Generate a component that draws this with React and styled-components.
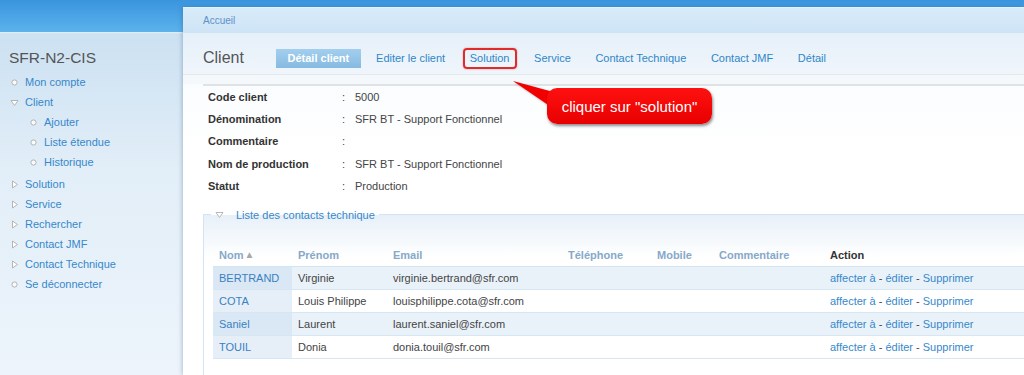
import React from "react";
import styled, { createGlobalStyle, css } from "styled-components";

const GlobalStyle = createGlobalStyle`
  html, body {
    margin: 0;
    padding: 0;
  }
  body {
    font-family: "Liberation Sans", Arial, sans-serif;
    font-size: 11px;
    color: #444;
  }
`;

const menu = [
  { label: "Mon compte", icon: "dot" },
  {
    label: "Client",
    icon: "open",
    children: ["Ajouter", "Liste étendue", "Historique"],
  },
  { label: "Solution", icon: "closed" },
  { label: "Service", icon: "closed" },
  { label: "Rechercher", icon: "closed" },
  { label: "Contact JMF", icon: "closed" },
  { label: "Contact Technique", icon: "closed" },
  { label: "Se déconnecter", icon: "dot" },
];

const tabs = [
  { label: "Détail client", active: true },
  { label: "Editer le client" },
  { label: "Solution", marked: true },
  { label: "Service" },
  { label: "Contact Technique" },
  { label: "Contact JMF" },
  { label: "Détail" },
];

const details = [
  ["Code client", "5000"],
  ["Dénomination", "SFR BT - Support Fonctionnel"],
  ["Commentaire", ""],
  ["Nom de production", "SFR BT - Support Fonctionnel"],
  ["Statut", "Production"],
];

const columns = [
  { label: "Nom", width: 79, sorted: true },
  { label: "Prénom", width: 95 },
  { label: "Email", width: 175 },
  { label: "Téléphone", width: 89 },
  { label: "Mobile", width: 62 },
  { label: "Commentaire", width: 111 },
  { label: "Action", dark: true },
];

const contacts = [
  ["BERTRAND", "Virginie", "virginie.bertrand@sfr.com"],
  ["COTA", "Louis Philippe", "louisphilippe.cota@sfr.com"],
  ["Saniel", "Laurent", "laurent.saniel@sfr.com"],
  ["TOUIL", "Donia", "donia.touil@sfr.com"],
];

/* little grey bullets of the side menu */
const Bullet = ({ type }) => {
  if (type === "open") {
    return (
      <svg width="9" height="9" viewBox="0 0 9 9">
        <path d="M1 2.5 H8 L4.5 7.5 Z" fill="#fff" stroke="#b4b4b4" strokeWidth="1" />
      </svg>
    );
  }
  if (type === "closed") {
    return (
      <svg width="9" height="9" viewBox="0 0 9 9">
        <path d="M2.5 1 V8 L7.5 4.5 Z" fill="#fff" stroke="#b4b4b4" strokeWidth="1" />
      </svg>
    );
  }
  return (
    <svg width="9" height="9" viewBox="0 0 9 9">
      <circle cx="4.5" cy="4.5" r="2.6" fill="#fafafa" stroke="#b4b4b4" strokeWidth="1" />
    </svg>
  );
};

const App = () => {
  return (
    <>
      <GlobalStyle />
      <Page>
        <Sidebar>
          <SiteTitle>SFR-N2-CIS</SiteTitle>
          <Menu>
            {menu.map((item) => (
              <li key={item.label}>
                <MenuItem>
                  <Bullet type={item.icon} />
                  <MenuLink>{item.label}</MenuLink>
                </MenuItem>
                {item.children && (
                  <SubMenu>
                    {item.children.map((child) => (
                      <MenuItem key={child} sub>
                        <Bullet type="dot" />
                        <MenuLink>{child}</MenuLink>
                      </MenuItem>
                    ))}
                  </SubMenu>
                )}
              </li>
            ))}
          </Menu>
        </Sidebar>

        <Main>
          <Breadcrumb>Accueil</Breadcrumb>
          <Header>
            <PageTitle>Client</PageTitle>
            <Tabs>
              {tabs.map((tab) => (
                <Tab key={tab.label} active={tab.active} marked={tab.marked}>
                  {tab.label}
                </Tab>
              ))}
            </Tabs>
          </Header>

          <Body>
            <DetailBox>
              {details.map(([label, value]) => (
                <React.Fragment key={label}>
                  <DetailLabel>{label}</DetailLabel>
                  <DetailColon>:</DetailColon>
                  <DetailValue>{value}</DetailValue>
                </React.Fragment>
              ))}
            </DetailBox>

            <ContactsFieldset>
              <Legend>
                <svg width="9" height="9" viewBox="0 0 9 9">
                  <path d="M1 2.5 H8 L4.5 7.5 Z" fill="#fff" stroke="#b8b8b8" strokeWidth="1" />
                </svg>
                <span>Liste des contacts technique</span>
              </Legend>
              <ContactTable>
                <colgroup>
                  {columns.map((col) => (
                    <col key={col.label} style={col.width ? { width: col.width } : undefined} />
                  ))}
                </colgroup>
                <thead>
                  <tr>
                    {columns.map((col) => (
                      <HeadCell key={col.label} dark={col.dark}>
                        {col.label}
                        {col.sorted && <SortArrow>▲</SortArrow>}
                      </HeadCell>
                    ))}
                  </tr>
                </thead>
                <tbody>
                  {contacts.map(([nom, prenom, email], i) => (
                    <Row key={nom} odd={i % 2 === 0}>
                      <NameCell odd={i % 2 === 0}>{nom}</NameCell>
                      <Cell>{prenom}</Cell>
                      <Cell>{email}</Cell>
                      <Cell />
                      <Cell />
                      <Cell />
                      <Cell>
                        <ActionLink>affecter à</ActionLink> - <ActionLink>éditer</ActionLink> -{" "}
                        <ActionLink>Supprimer</ActionLink>
                      </Cell>
                    </Row>
                  ))}
                </tbody>
              </ContactTable>
            </ContactsFieldset>
          </Body>

          {/* annotation over the screen */}
          <Callout>
            <CalloutTail width="52" height="40" viewBox="0 0 52 40">
              <path d="M2 2 L46 14 L46 32 Z" fill="#f20000" />
            </CalloutTail>
            <CalloutText>cliquer sur "solution"</CalloutText>
          </Callout>
        </Main>
      </Page>
    </>
  );
};

export default App;

const Page = styled.div`
  display: grid;
  grid-template-columns: 183px 1fr;
  height: 375px;
  overflow: hidden;
  background: linear-gradient(
    to bottom,
    #3a95de 0,
    #5bb2ec 32px,
    #e4f0f9 32px,
    #cce1f2 34px,
    #e2eef8 170px,
    #edf4fb 375px
  );
`;

const Sidebar = styled.aside`
  padding-top: 48px;
`;

const SiteTitle = styled.div`
  font-size: 15.5px;
  line-height: 20px;
  color: #555;
  padding-left: 9px;
`;

const Menu = styled.ul`
  list-style: none;
  margin: 4px 0 0;
  padding: 0;
`;

const SubMenu = styled.div`
  margin-bottom: 2px;
`;

const MenuItem = styled.div`
  display: flex;
  align-items: center;
  gap: 6px;
  height: 20px;
  padding-left: ${({ sub }) => (sub ? "29px" : "10px")};
`;

const MenuLink = styled.span`
  color: #3688cb;
  font-size: 11px;
`;

const Main = styled.main`
  position: relative;
  display: flex;
  flex-direction: column;
  min-width: 0;
  margin-top: 7px;
  background: #fff;
  box-shadow: -1px 0 4px rgba(40, 80, 120, 0.3);
  border-top: 1px solid #e6f2fc;
  overflow: hidden;
`;

const Breadcrumb = styled.div`
  flex-shrink: 0;
  height: 25px;
  line-height: 25px;
  padding-left: 20px;
  font-size: 10px;
  color: #5f91c7;
  background: linear-gradient(to bottom, #d8ebf9, #cee4f6);
`;

const Header = styled.div`
  flex-shrink: 0;
  display: flex;
  align-items: center;
  height: 32px;
  padding: 9px 0 0 20px;
  background: linear-gradient(to bottom, #e6f0f9, #eff5fb);
  border-bottom: 1px solid #e1e9f1;
`;

const PageTitle = styled.h1`
  margin: 0;
  font-size: 16px;
  font-weight: normal;
  color: #555;
  width: 73px;
`;

const Tabs = styled.nav`
  display: flex;
  align-items: center;
`;

const Tab = styled.span`
  display: inline-flex;
  align-items: center;
  height: 19px;
  padding: 0 12.3px;
  color: #2f86c9;
  font-size: 11px;
  white-space: nowrap;

  ${({ active }) =>
    active &&
    css`
      padding: 0 11.5px;
      margin-right: 3px;
      color: #fff;
      font-weight: bold;
      background: linear-gradient(to bottom, #a3cfee, #86bae2);
    `}

  ${({ marked }) =>
    marked &&
    css`
      height: 17px;
      padding: 0 5px;
      margin: 0 5.3px;
      border: 2px solid #e32a2a;
      border-radius: 4px;
      box-shadow: 0 0 2px rgba(120, 0, 0, 0.35);
    `}
`;

const Body = styled.div`
  flex: 1;
  min-height: 0;
  padding: 9px 0 0 20px;
  background: linear-gradient(to bottom, #f4f8fb 0, #f4f8fb 9px, #fafcfe 9px, #fff 80px);
`;

const DetailBox = styled.div`
  display: grid;
  grid-template-columns: 139px 13px 1fr;
  grid-auto-rows: 22.2px;
  align-items: center;
  border-top: 2px solid #dde2e7;
`;

const DetailLabel = styled.div`
  padding-left: 5px;
  font-weight: bold;
  color: #333;
`;

const DetailColon = styled.div`
  color: #444;
`;

const DetailValue = styled.div`
  color: #444;
`;

const ContactsFieldset = styled.fieldset`
  margin: 11px -30px 0 0;
  padding: 0 0 0 9px;
  min-width: 0;
  border: 1px solid #d4e4f2;
  border-right: none;
  border-bottom: none;
  background: linear-gradient(to bottom, #e7f0f8 0, #fff 42px);
  height: 170px;
`;

const Legend = styled.legend`
  display: flex;
  align-items: center;
  gap: 12px;
  margin-left: -2px;
  padding: 0 4px;
  line-height: 14px;
  color: #3688cb;
  font-size: 11px;
`;

const ContactTable = styled.table`
  width: 100%;
  margin-top: 23px;
  border-collapse: collapse;
  table-layout: fixed;
`;

const HeadCell = styled.th`
  height: 21px;
  padding: 0 0 0 6px;
  text-align: left;
  font-size: 11px;
  font-weight: bold;
  color: ${({ dark }) => (dark ? "#333" : "#87a8c9")};
  border-bottom: 1px solid #d3e4f2;
  white-space: nowrap;
`;

const SortArrow = styled.span`
  font-size: 10px;
  color: #a8a8a8;
  margin-left: 1px;
  vertical-align: 1px;
`;

const Row = styled.tr`
  background: ${({ odd }) => (odd ? "#eaf2f9" : "#fff")};
  border-bottom: 1px solid #d6e6f3;
`;

const Cell = styled.td`
  height: 22px;
  padding: 0 0 0 6px;
  color: #444;
  white-space: nowrap;
`;

const NameCell = styled(Cell)`
  color: #3a80c3;
  background: ${({ odd }) => (odd ? "#d9e8f4" : "#e6eff8")};
`;

const ActionLink = styled.span`
  color: #3688cb;
`;

const Callout = styled.div`
  position: absolute;
  left: 364px;
  top: 80px;
  width: 165px;
  height: 36px;
`;

const CalloutTail = styled.svg`
  position: absolute;
  left: -36px;
  top: -9px;
  filter: drop-shadow(1px 1px 1px rgba(0, 0, 0, 0.3));
`;

const CalloutText = styled.div`
  position: relative;
  display: flex;
  align-items: center;
  justify-content: center;
  height: 100%;
  border-radius: 10px;
  background: linear-gradient(to bottom, #ff1010, #e80000);
  box-shadow: 1px 2px 3px rgba(0, 0, 0, 0.45);
  color: #fff;
  font-size: 15px;
`;
